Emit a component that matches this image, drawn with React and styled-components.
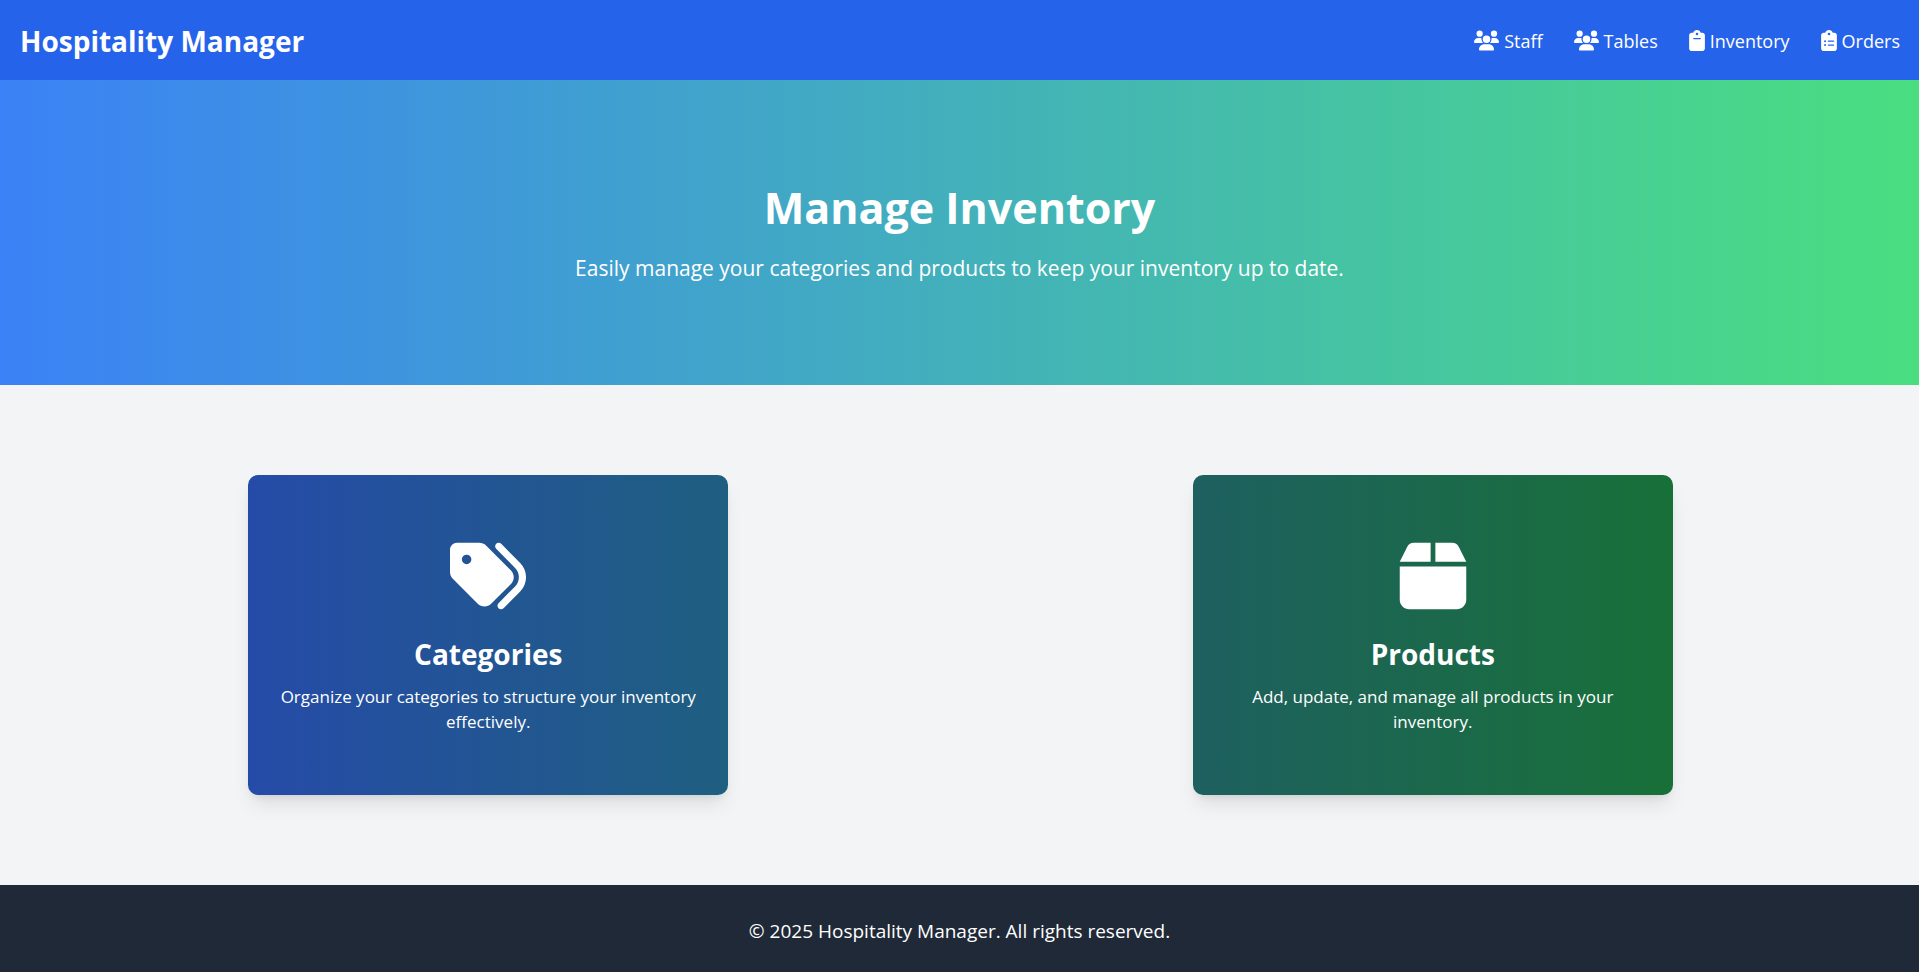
import React from "react";
import styled, { createGlobalStyle } from "styled-components";
import { FaUsers, FaClipboard, FaClipboardList, FaTags, FaBox } from "react-icons/fa6";

const GlobalStyle = createGlobalStyle`
  *, *::before, *::after { box-sizing: border-box; }
  body {
    margin: 0;
    background: #f3f4f6;
    color: #ffffff;
    font-family: "Segoe UI", "Open Sans", "Noto Sans", sans-serif;
  }
  h1, h2, p { margin: 0; }
`;

const Page = styled.div`
  min-height: 100vh;
  display: flex;
  flex-direction: column;
`;

const Header = styled.header`
  display: flex;
  align-items: center;
  justify-content: space-between;
  min-height: 80px;
  padding: 1px 19px 0 20px;
  background: #2563eb;
`;

const Brand = styled.a`
  color: inherit;
  text-decoration: none;
  font-size: 28px;
  line-height: 40px;
  font-weight: 700;
`;

const Nav = styled.nav`
  display: flex;
  gap: 31px;
`;

const NavLink = styled.a`
  display: flex;
  align-items: center;
  gap: 5px;
  color: inherit;
  text-decoration: none;
  font-size: 18px;
  line-height: 30px;
`;

const NavIcon = styled.svg`
  width: ${(p) => p.$width}px;
  height: 21px;
`;

const Hero = styled.section`
  padding: 96px 20px 99px;
  text-align: center;
  background: linear-gradient(to right, #3b82f6, #4ade80);
`;

const HeroTitle = styled.h1`
  font-size: 43px;
  line-height: 64px;
  font-weight: 700;
`;

const HeroText = styled.p`
  margin-top: 10px;
  font-size: 21px;
  line-height: 36px;
`;

const Main = styled.main`
  display: flex;
  flex-wrap: wrap;
  justify-content: space-around;
  row-gap: 32px;
  padding: 90px 14px 90px 16px;
`;

const Card = styled.a`
  display: flex;
  flex-direction: column;
  align-items: center;
  justify-content: center;
  width: 480px;
  max-width: 100%;
  min-height: 320px;
  padding: 34px 32px 32px;
  border-radius: 10px;
  color: inherit;
  text-align: center;
  text-decoration: none;
  background: linear-gradient(to right, ${(p) => p.$from}, ${(p) => p.$to});
  box-shadow: 0 12px 19px -4px rgba(0, 0, 0, 0.1), 0 5px 8px -5px rgba(0, 0, 0, 0.1);
`;

const CardIcon = styled.svg`
  width: 76px;
  height: 76px;
`;

const CardTitle = styled.h2`
  margin-top: 20px;
  font-size: 28px;
  line-height: 40px;
  font-weight: 700;
`;

const CardText = styled.p`
  margin-top: 10px;
  font-size: 17px;
  line-height: 25px;
`;

const Footer = styled.footer`
  flex: 1;
  padding: 31px 20px 30px;
  text-align: center;
  background: #1f2937;
  font-size: 19px;
  line-height: 30px;
`;

const links = [
  { label: "Staff", icon: FaUsers, width: 25 },
  { label: "Tables", icon: FaUsers, width: 25 },
  { label: "Inventory", icon: FaClipboard, width: 16 },
  { label: "Orders", icon: FaClipboardList, width: 16 },
];

const cards = [
  {
    title: "Categories",
    text: "Organize your categories to structure your inventory effectively.",
    icon: FaTags,
    from: "#254ba8",
    to: "#1f5f80",
  },
  {
    title: "Products",
    text: "Add, update, and manage all products in your inventory.",
    icon: FaBox,
    from: "#1e6060",
    to: "#187038",
  },
];

export default function App() {
  return (
    <Page>
      <GlobalStyle />
      <Header>
        <Brand href="#">Hospitality Manager</Brand>
        <Nav>
          {links.map((link) => (
            <NavLink key={link.label} href={`#${link.label.toLowerCase()}`}>
              <NavIcon as={link.icon} $width={link.width} aria-hidden="true" />
              {link.label}
            </NavLink>
          ))}
        </Nav>
      </Header>
      <Hero>
        <HeroTitle>Manage Inventory</HeroTitle>
        <HeroText>Easily manage your categories and products to keep your inventory up to date.</HeroText>
      </Hero>
      <Main>
        {cards.map((card) => (
          <Card key={card.title} href={`#${card.title.toLowerCase()}`} $from={card.from} $to={card.to}>
            <CardIcon as={card.icon} aria-hidden="true" />
            <CardTitle>{card.title}</CardTitle>
            <CardText>{card.text}</CardText>
          </Card>
        ))}
      </Main>
      <Footer>© 2025 Hospitality Manager. All rights reserved.</Footer>
    </Page>
  );
}
